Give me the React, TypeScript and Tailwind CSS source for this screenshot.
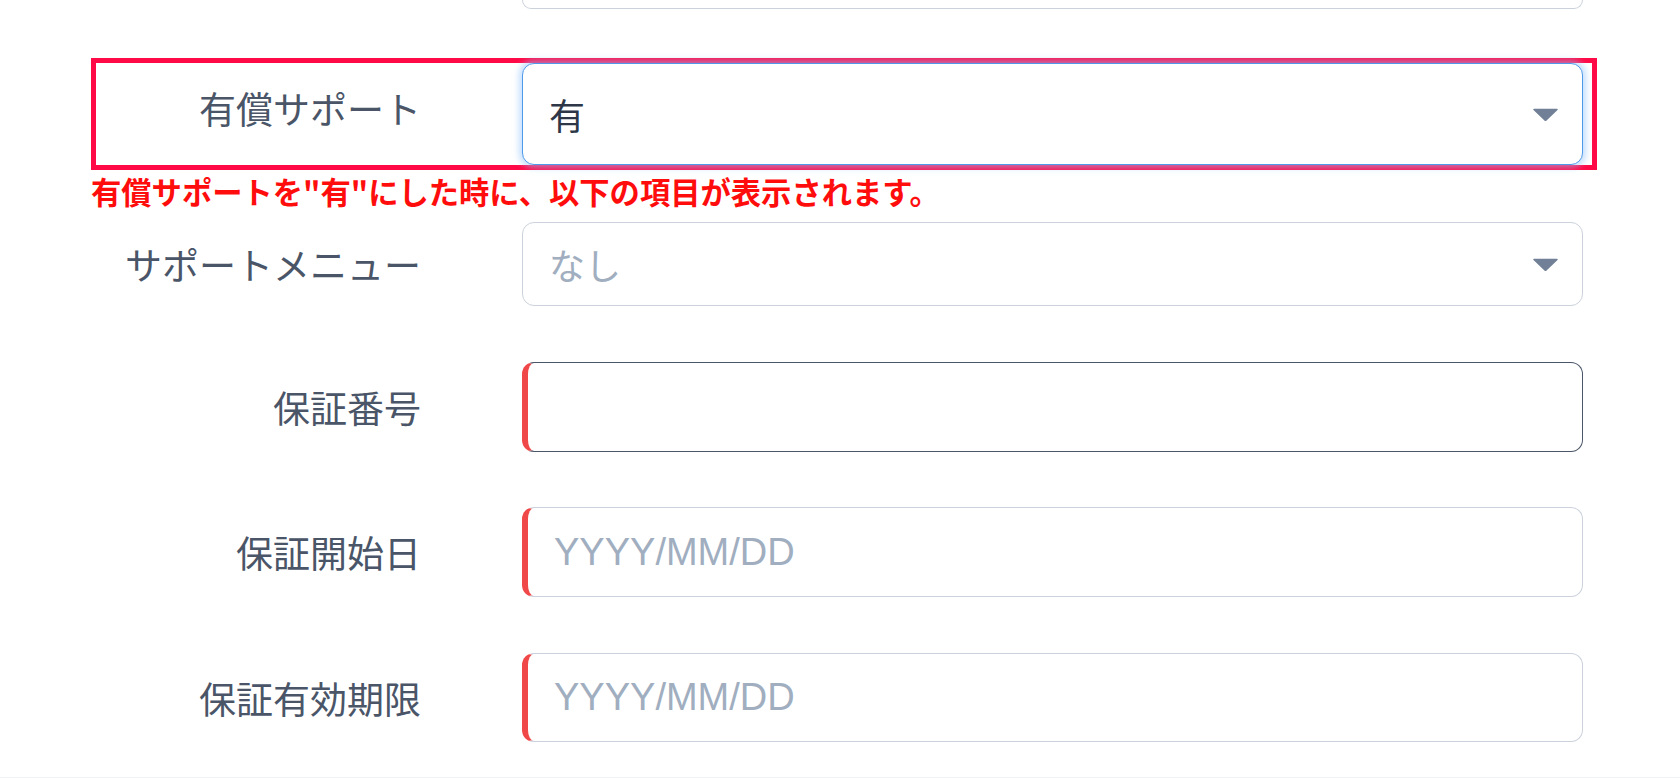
import React from "react";

const font = { fontFamily: '"Noto Sans CJK JP", "Noto Sans", sans-serif' };
const latin = { fontFamily: '"Liberation Sans", "Noto Sans CJK JP", sans-serif' };

function Caret() {
  return (
    <svg width="25" height="13" viewBox="0 0 25 13" className="shrink-0">
      <path d="M1 1.5 L24 1.5 L12.5 12.5 Z" fill="#718096" stroke="#718096" strokeWidth="1.5" strokeLinejoin="round" />
    </svg>
  );
}

function Label({ children, className = "" }: { children: React.ReactNode; className?: string }) {
  return (
    <div className={"w-[325px] shrink-0 text-right text-[37px] leading-[44px] text-[#4a5568] " + className}>
      {children}
    </div>
  );
}

export default function App() {
  return (
    <div className="min-h-[778px] w-full bg-white border-b border-[#f1f3f5]" style={font}>
      {/* cut-off previous input */}
      <div className="flex pl-[96px] pr-[97px]">
        <div className="w-[325px] shrink-0" />
        <div className="ml-[101px] h-[9px] flex-1 rounded-b-[12px] border border-t-0 border-[#cbd2dc]" />
      </div>

      {/* highlighted row */}
      <div className="ml-[91px] mr-[83px] mt-[49px] flex border-[5px] border-[#ff0a47] pr-[9px]">
        <Label className="pt-[23px]">有償サポート</Label>
        <div className="ml-[101px] flex h-[102px] flex-1 items-center justify-between rounded-[12px] border border-[#4f9ae8] bg-white pl-[26px] pr-[24px] shadow-[0_0_6px_3px_rgba(147,197,253,0.55)]">
          <span className="text-[36px] text-[#2d3748]">有</span>
          <Caret />
        </div>
      </div>

      <div className="ml-[91px] mt-[3px] text-[30.3px] font-bold leading-[36px] text-[#ff0d0d]">
        有償サポートを"有"にした時に、以下の項目が表示されます。
      </div>

      <div className="mt-[13px] flex items-center pl-[96px] pr-[97px]">
        <Label>サポートメニュー</Label>
        <div className="ml-[101px] flex h-[84px] flex-1 items-center justify-between rounded-[12px] border border-[#cbd2dc] pl-[26px] pr-[24px]">
          <span className="text-[36px] text-[#a0aec0]">なし</span>
          <Caret />
        </div>
      </div>

      <div className="mt-[56px] flex items-center pl-[96px] pr-[97px]">
        <Label>保証番号</Label>
        <div className="ml-[101px] h-[90px] flex-1 rounded-[12px] border border-l-[6px] border-[#4a5568] border-l-[#f04848]" />
      </div>

      <div className="mt-[55px] flex items-center pl-[96px] pr-[97px]">
        <Label>保証開始日</Label>
        <div className="ml-[101px] flex h-[90px] flex-1 items-center rounded-[12px] border border-l-[6px] border-[#cbd2dc] border-l-[#f04848] pl-[26px]">
          <span className="text-[38px] text-[#a0aec0]" style={latin}>YYYY/MM/DD</span>
        </div>
      </div>

      <div className="mt-[56px] flex items-center pl-[96px] pr-[97px]">
        <Label>保証有効期限</Label>
        <div className="ml-[101px] flex h-[89px] flex-1 items-center rounded-[12px] border border-l-[6px] border-[#cbd2dc] border-l-[#f04848] pl-[26px]">
          <span className="text-[38px] text-[#a0aec0]" style={latin}>YYYY/MM/DD</span>
        </div>
      </div>
    </div>
  );
}
